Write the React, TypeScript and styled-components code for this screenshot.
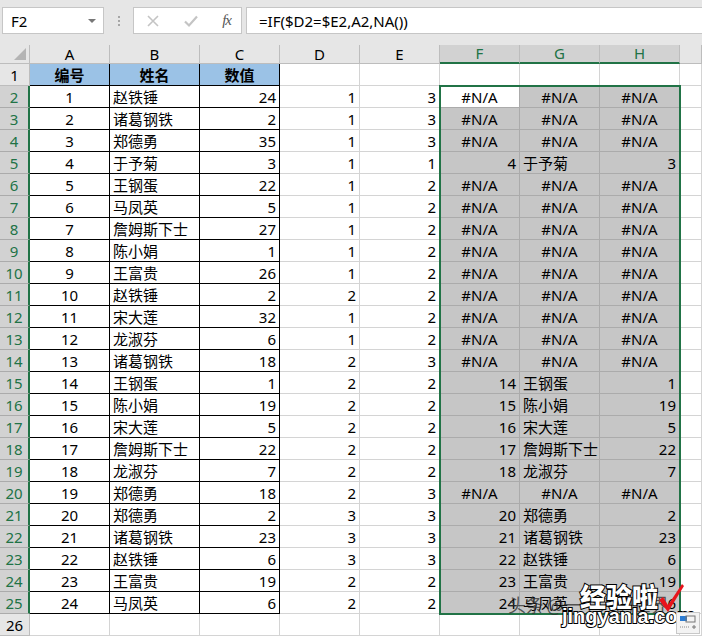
import React from "react";
import styled, { createGlobalStyle } from "styled-components";

const GREEN = "#217346";
const GRID = "#d4d4d4";

const GlobalStyle = createGlobalStyle`
    html, body {
        margin: 0;
        padding: 0;
        background: #ffffff;
        overflow: hidden;
    }
    body {
        font-family: "Noto Sans", "Noto Sans CJK SC", sans-serif;
        color: #000;
    }
`;

interface Row {
    a: number;
    b: string;
    c: number;
    d: number;
    e: number;
    match: boolean;
}

const raw: [string, number, number, number, boolean?][] = [
    ["赵铁锤", 24, 1, 3],
    ["诸葛钢铁", 2, 1, 3],
    ["郑德勇", 35, 1, 3],
    ["于予菊", 3, 1, 1, true],
    ["王钢蛋", 22, 1, 2],
    ["马凤英", 5, 1, 2],
    ["詹姆斯下士", 27, 1, 2],
    ["陈小娟", 1, 1, 2],
    ["王富贵", 26, 1, 2],
    ["赵铁锤", 2, 2, 2],
    ["宋大莲", 32, 1, 2],
    ["龙淑芬", 6, 1, 2],
    ["诸葛钢铁", 18, 2, 3],
    ["王钢蛋", 1, 2, 2, true],
    ["陈小娟", 19, 2, 2, true],
    ["宋大莲", 5, 2, 2, true],
    ["詹姆斯下士", 22, 2, 2, true],
    ["龙淑芬", 7, 2, 2, true],
    ["郑德勇", 18, 2, 3],
    ["郑德勇", 2, 3, 3, true],
    ["诸葛钢铁", 23, 3, 3, true],
    ["赵铁锤", 6, 3, 3, true],
    ["王富贵", 19, 2, 2, true],
    ["马凤英", 6, 2, 2, true],
];

const rows: Row[] = raw.map(([b, c, d, e, match], i) => ({
    a: i + 1,
    b,
    c,
    d,
    e,
    match: !!match,
}));

const columns = ["A", "B", "C", "D", "E", "F", "G", "H", ""];

const Page = styled.div`
    position: relative;
    width: 702px;
    height: 637px;
    overflow: hidden;
    background: #ffffff;
`;

const FormulaBar = styled.div`
    display: flex;
    align-items: center;
    height: 45px;
    padding: 0 0 4px 2px;
    box-sizing: border-box;
    background: #e6e6e6;
`;

const NameBox = styled.div`
    display: flex;
    align-items: center;
    justify-content: space-between;
    width: 102px;
    height: 27px;
    box-sizing: border-box;
    padding: 0 7px 0 8px;
    background: #fff;
    border: 1px solid #c6c6c6;
    font-size: 15px;
`;

const DropArrow = styled.span`
    width: 0;
    height: 0;
    border-left: 4px solid transparent;
    border-right: 4px solid transparent;
    border-top: 4px solid #777;
`;

const Grip = styled.div`
    display: flex;
    flex-direction: column;
    gap: 2px;
    margin: 0 13px 0 14px;
    span {
        width: 2px;
        height: 2px;
        background: #a6a6a6;
    }
`;

const FxButtons = styled.div`
    display: flex;
    align-items: center;
    justify-content: space-between;
    width: 109px;
    height: 27px;
    box-sizing: border-box;
    padding: 0 10px 0 12px;
    background: #fff;
    border: 1px solid #c6c6c6;
`;

const FxLabel = styled.span`
    font-family: "Liberation Serif", serif;
    font-style: italic;
    font-size: 15px;
    color: #555;
    letter-spacing: -1px;
`;

const FormulaInput = styled.div`
    flex: 1;
    height: 27px;
    margin-left: 4px;
    box-sizing: border-box;
    padding-left: 12px;
    display: flex;
    align-items: center;
    background: #fff;
    border: 1px solid #c6c6c6;
    border-right: none;
    font-size: 15px;
`;

const Sheet = styled.div`
    position: relative;
    display: grid;
    grid-template-columns: 30px 80px 90px repeat(6, 80px) 1fr;
    grid-template-rows: 19px repeat(26, 22px);
    font-size: 15px;
`;

const Corner = styled.div`
    position: relative;
    background: #e6e6e6;
    border-right: 1px solid #bdbdbd;
    border-bottom: 1px solid #bdbdbd;
    &::after {
        content: "";
        position: absolute;
        right: 3px;
        bottom: 3px;
        border-left: 12px solid transparent;
        border-bottom: 12px solid #b4b4b4;
    }
`;

const ColHeader = styled.div<{ $selected?: boolean }>`
    display: flex;
    align-items: center;
    justify-content: center;
    box-sizing: border-box;
    background: ${(p) => (p.$selected ? "#d2d2d2" : "#e6e6e6")};
    color: ${(p) => (p.$selected ? GREEN : "#000")};
    border-right: 1px solid #bdbdbd;
    border-bottom: ${(p) => (p.$selected ? `2px solid ${GREEN}` : "1px solid #bdbdbd")};
    line-height: 1;
`;

const RowHeader = styled.div<{ $selected?: boolean }>`
    display: flex;
    align-items: center;
    justify-content: center;
    box-sizing: border-box;
    background: ${(p) => (p.$selected ? "#d2d2d2" : "#e6e6e6")};
    color: ${(p) => (p.$selected ? GREEN : "#000")};
    border-right: ${(p) => (p.$selected ? `2px solid ${GREEN}` : "1px solid #bdbdbd")};
    border-bottom: 1px solid ${(p) => (p.$selected ? "#ababab" : "#bdbdbd")};
`;

type Align = "left" | "center" | "right";

const Cell = styled.div<{ $align?: Align; $fill?: string; $edge?: string; $bold?: boolean }>`
    display: flex;
    align-items: center;
    justify-content: ${(p) =>
        p.$align === "right" ? "flex-end" : p.$align === "center" ? "center" : "flex-start"};
    box-sizing: border-box;
    padding: 0 3px;
    white-space: nowrap;
    overflow: visible;
    background: ${(p) => p.$fill || "#fff"};
    border-right: 1px solid ${(p) => p.$edge || GRID};
    border-bottom: 1px solid ${(p) => p.$edge || GRID};
    font-weight: ${(p) => (p.$bold ? 700 : 400)};
`;

const Selection = styled.div`
    position: absolute;
    left: 439px;
    top: 40px;
    width: 242px;
    height: 530px;
    box-sizing: border-box;
    border: 2px solid ${GREEN};
    pointer-events: none;
`;

const QuickAnalysis = styled.div`
    position: absolute;
    right: 2px;
    bottom: 3px;
    width: 22px;
    height: 20px;
    background: #f3f3f3;
    border: 1px solid #c8c8c8;
`;

const Watermark = styled.div`
    position: absolute;
    left: 500px;
    top: 580px;
    width: 200px;
    height: 57px;
    pointer-events: none;
`;

const Credit = styled.span`
    position: absolute;
    left: 8px;
    top: 14px;
    font-family: "Noto Sans CJK SC", sans-serif;
    font-size: 18px;
    line-height: 1.2;
    color: rgba(50, 50, 50, 0.8);
    letter-spacing: -0.5px;
    white-space: nowrap;
`;

const Brand = styled.span`
    position: absolute;
    left: 80px;
    top: 3px;
    font-family: "Noto Sans CJK SC", sans-serif;
    font-weight: 900;
    font-size: 26px;
    line-height: 1;
    color: #fff;
    -webkit-text-stroke: 2px #000;
    paint-order: stroke fill;
    white-space: nowrap;
`;

const Domain = styled.span`
    position: absolute;
    left: 62px;
    top: 26px;
    font-family: "Liberation Sans", sans-serif;
    font-weight: 700;
    font-size: 20px;
    line-height: 1;
    color: #fff;
    -webkit-text-stroke: 2px #000;
    paint-order: stroke fill;
    white-space: nowrap;
`;

const Tick = styled.svg`
    position: absolute;
    left: 157px;
    top: 3px;
`;

const NA = "#N/A";

const App: React.FC = () => {
    return (
        <Page>
            <GlobalStyle />
            <FormulaBar>
                <NameBox>
                    <span>F2</span>
                    <DropArrow />
                </NameBox>
                <Grip>
                    <span />
                    <span />
                    <span />
                </Grip>
                <FxButtons>
                    <svg width="14" height="14" viewBox="0 0 14 14">
                        <path d="M2 2L12 12M12 2L2 12" stroke="#c4c4c4" strokeWidth="1.6" fill="none" />
                    </svg>
                    <svg width="16" height="14" viewBox="0 0 16 14">
                        <path d="M2 7.5L6 11.5L14 2.5" stroke="#c4c4c4" strokeWidth="2.2" fill="none" />
                    </svg>
                    <FxLabel>fx</FxLabel>
                </FxButtons>
                <FormulaInput>=IF($D2=$E2,A2,NA())</FormulaInput>
            </FormulaBar>

            <Sheet>
                <Corner />
                {columns.map((c, i) => (
                    <ColHeader key={i} $selected={i >= 5 && i <= 7}>
                        {c}
                    </ColHeader>
                ))}

                <RowHeader>1</RowHeader>
                <Cell $align="center" $fill="#9bc2e6" $edge="#000" $bold>编号</Cell>
                <Cell $align="center" $fill="#9bc2e6" $edge="#000" $bold>姓名</Cell>
                <Cell $align="center" $fill="#9bc2e6" $edge="#000" $bold>数值</Cell>
                {Array.from({ length: 6 }).map((_, i) => (
                    <Cell key={i} />
                ))}

                {rows.map((r, i) => {
                    const first = i === 0;
                    const sel = "#c6c6c6";
                    const selEdge = "#ababab";
                    return (
                        <React.Fragment key={r.a}>
                            <RowHeader $selected>{r.a + 1}</RowHeader>
                            <Cell $align="center" $edge="#000">{r.a}</Cell>
                            <Cell $edge="#000">{r.b}</Cell>
                            <Cell $align="right" $edge="#000">{r.c}</Cell>
                            <Cell $align="right">{r.d}</Cell>
                            <Cell $align="right">{r.e}</Cell>
                            {r.match ? (
                                <>
                                    <Cell $align="right" $fill={sel} $edge={selEdge}>{r.a}</Cell>
                                    <Cell $fill={sel} $edge={selEdge}>{r.b}</Cell>
                                    <Cell $align="right" $fill={sel} $edge={selEdge}>{r.c}</Cell>
                                </>
                            ) : (
                                <>
                                    <Cell $align="center" $fill={first ? "#fff" : sel} $edge={selEdge}>{NA}</Cell>
                                    <Cell $align="center" $fill={sel} $edge={selEdge}>{NA}</Cell>
                                    <Cell $align="center" $fill={sel} $edge={selEdge}>{NA}</Cell>
                                </>
                            )}
                            <Cell />
                        </React.Fragment>
                    );
                })}

                <RowHeader>26</RowHeader>
                {Array.from({ length: 9 }).map((_, i) => (
                    <Cell key={i} />
                ))}

                <Selection />
            </Sheet>

            <Watermark>
                <Credit>头条 @一个人的世界</Credit>
                <Brand>经验啦</Brand>
                <Tick width="28" height="30" viewBox="0 0 28 30">
                    <path d="M2 17L6 14L11 22L25 1L27 3L11 29Z" fill="#e8141b" />
                </Tick>
                <Domain>jingyanla.com</Domain>
            </Watermark>

            <QuickAnalysis>
                <svg width="22" height="20" viewBox="0 0 22 20">
                    <rect x="3" y="3" width="7" height="5" fill="#2b7cd3" />
                    <rect x="9" y="3" width="9" height="6" fill="none" stroke="#777" strokeWidth="1" />
                    <path d="M3 14H12" stroke="#888" strokeDasharray="1 1" />
                    <path d="M15 14H19M17 12V16" stroke="#777" />
                </svg>
            </QuickAnalysis>
        </Page>
    );
};

export default App;
